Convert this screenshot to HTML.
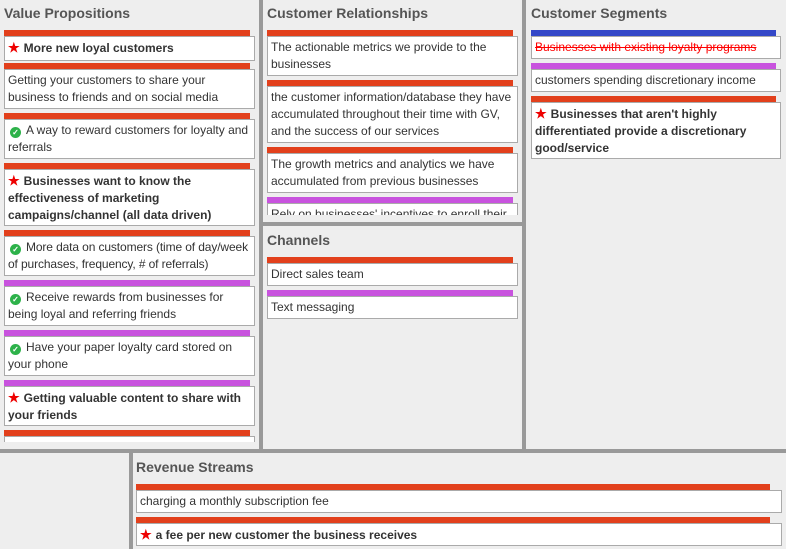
<!DOCTYPE html>
<html><head><style>
*{margin:0;padding:0;box-sizing:border-box}
body{width:786px;height:549px;background:#eee;position:relative;overflow:hidden;font-family:"Liberation Sans",sans-serif;color:#333}
.d{position:absolute;background:#999}
h2{position:absolute;font-size:14px;font-weight:bold;color:#555;line-height:17px}
.b{position:absolute;height:6px}
.r{background:#e2401c}.p{background:#c853de}.bl{background:#3448c8}
.c{position:absolute;background:#fff;border:1px solid #aaa;font-size:12px;line-height:17px;padding:2px 3px;overflow:hidden}
.s{font-weight:bold}
.st{color:#e00;font-size:13px;margin-right:4px}
.ck{display:inline-block;width:11px;height:11px;border-radius:50%;background:#2db24a;color:#fff;font-size:8px;line-height:11px;text-align:center;margin:0 5px 0 2px;vertical-align:-1px;font-weight:bold}
.clip{position:absolute;overflow:hidden}
.n{letter-spacing:-0.12px}
</style></head><body>
<div class="d" style="left:259px;top:0;width:4px;height:450px"></div>
<div class="d" style="left:522px;top:0;width:4px;height:450px"></div>
<div class="d" style="left:263px;top:222px;width:259px;height:4px"></div>
<div class="d" style="left:0;top:449px;width:786px;height:4px"></div>
<div class="d" style="left:129px;top:453px;width:4px;height:96px"></div>

<h2 style="left:4px;top:5px">Value Propositions</h2>
<div class="clip" style="left:0;top:0;width:259px;height:442px">
<div class="b r" style="left:4px;top:30px;width:246px"></div>
<div class="c s" style="left:4px;top:36px;width:251px;height:25px"><span class="st">★</span>More new loyal customers</div>
<div class="b r" style="left:4px;top:63px;width:246px"></div>
<div class="c" style="left:4px;top:69px;width:251px;height:40px">Getting your customers to share your business to friends and on social media</div>
<div class="b r" style="left:4px;top:113px;width:246px"></div>
<div class="c" style="left:4px;top:119px;width:251px;height:40px"><span class="ck">✓</span>A way to reward customers for loyalty and referrals</div>
<div class="b r" style="left:4px;top:163px;width:246px"></div>
<div class="c s" style="left:4px;top:169px;width:251px;height:57px"><span class="st">★</span>Businesses want to know the effectiveness of marketing campaigns/channel (all data driven)</div>
<div class="b r" style="left:4px;top:230px;width:246px"></div>
<div class="c n" style="left:4px;top:236px;width:251px;height:40px"><span class="ck">✓</span>More data on customers (time of day/week of purchases, frequency, # of referrals)</div>
<div class="b p" style="left:4px;top:280px;width:246px"></div>
<div class="c" style="left:4px;top:286px;width:251px;height:40px"><span class="ck">✓</span>Receive rewards from businesses for being loyal and referring friends</div>
<div class="b p" style="left:4px;top:330px;width:246px"></div>
<div class="c" style="left:4px;top:336px;width:251px;height:40px"><span class="ck">✓</span>Have your paper loyalty card stored on your phone</div>
<div class="b p" style="left:4px;top:380px;width:246px"></div>
<div class="c s" style="left:4px;top:386px;width:251px;height:40px"><span class="st">★</span>Getting valuable content to share with your friends</div>
<div class="b r" style="left:4px;top:430px;width:246px"></div>
<div class="c" style="left:4px;top:436px;width:251px;height:40px"></div>
</div>

<h2 style="left:267px;top:5px">Customer Relationships</h2>
<div class="clip" style="left:263px;top:0;width:259px;height:215px">
<div class="b r" style="left:4px;top:30px;width:246px"></div>
<div class="c" style="left:4px;top:36px;width:251px;height:40px">The actionable metrics we provide to the businesses</div>
<div class="b r" style="left:4px;top:80px;width:246px"></div>
<div class="c" style="left:4px;top:86px;width:251px;height:57px">the customer information/database they have accumulated throughout their time with GV, and the success of our services</div>
<div class="b r" style="left:4px;top:147px;width:246px"></div>
<div class="c" style="left:4px;top:153px;width:251px;height:40px">The growth metrics and analytics we have accumulated from previous businesses</div>
<div class="b p" style="left:4px;top:197px;width:246px"></div>
<div class="c" style="left:4px;top:203px;width:251px;height:40px">Rely on businesses' incentives to enroll their</div>
</div>

<h2 style="left:267px;top:232px">Channels</h2>
<div class="b r" style="left:267px;top:257px;width:246px"></div>
<div class="c" style="left:267px;top:263px;width:251px;height:23px">Direct sales team</div>
<div class="b p" style="left:267px;top:290px;width:246px"></div>
<div class="c" style="left:267px;top:296px;width:251px;height:23px">Text messaging</div>

<h2 style="left:531px;top:5px">Customer Segments</h2>
<div class="b bl" style="left:531px;top:30px;width:245px"></div>
<div class="c" style="left:531px;top:36px;width:250px;height:23px;color:#f00;text-decoration:line-through">Businesses with existing loyalty programs</div>
<div class="b p" style="left:531px;top:63px;width:245px"></div>
<div class="c" style="left:531px;top:69px;width:250px;height:23px">customers spending discretionary income</div>
<div class="b r" style="left:531px;top:96px;width:245px"></div>
<div class="c s" style="left:531px;top:102px;width:250px;height:57px"><span class="st">★</span>Businesses that aren't highly differentiated provide a discretionary good/service</div>

<h2 style="left:136px;top:459px">Revenue Streams</h2>
<div class="b r" style="left:136px;top:484px;width:634px"></div>
<div class="c" style="left:136px;top:490px;width:646px;height:23px">charging a monthly subscription fee</div>
<div class="b r" style="left:136px;top:517px;width:634px"></div>
<div class="c s" style="left:136px;top:523px;width:646px;height:23px"><span class="st">★</span>a fee per new customer the business receives</div>
</body></html>
